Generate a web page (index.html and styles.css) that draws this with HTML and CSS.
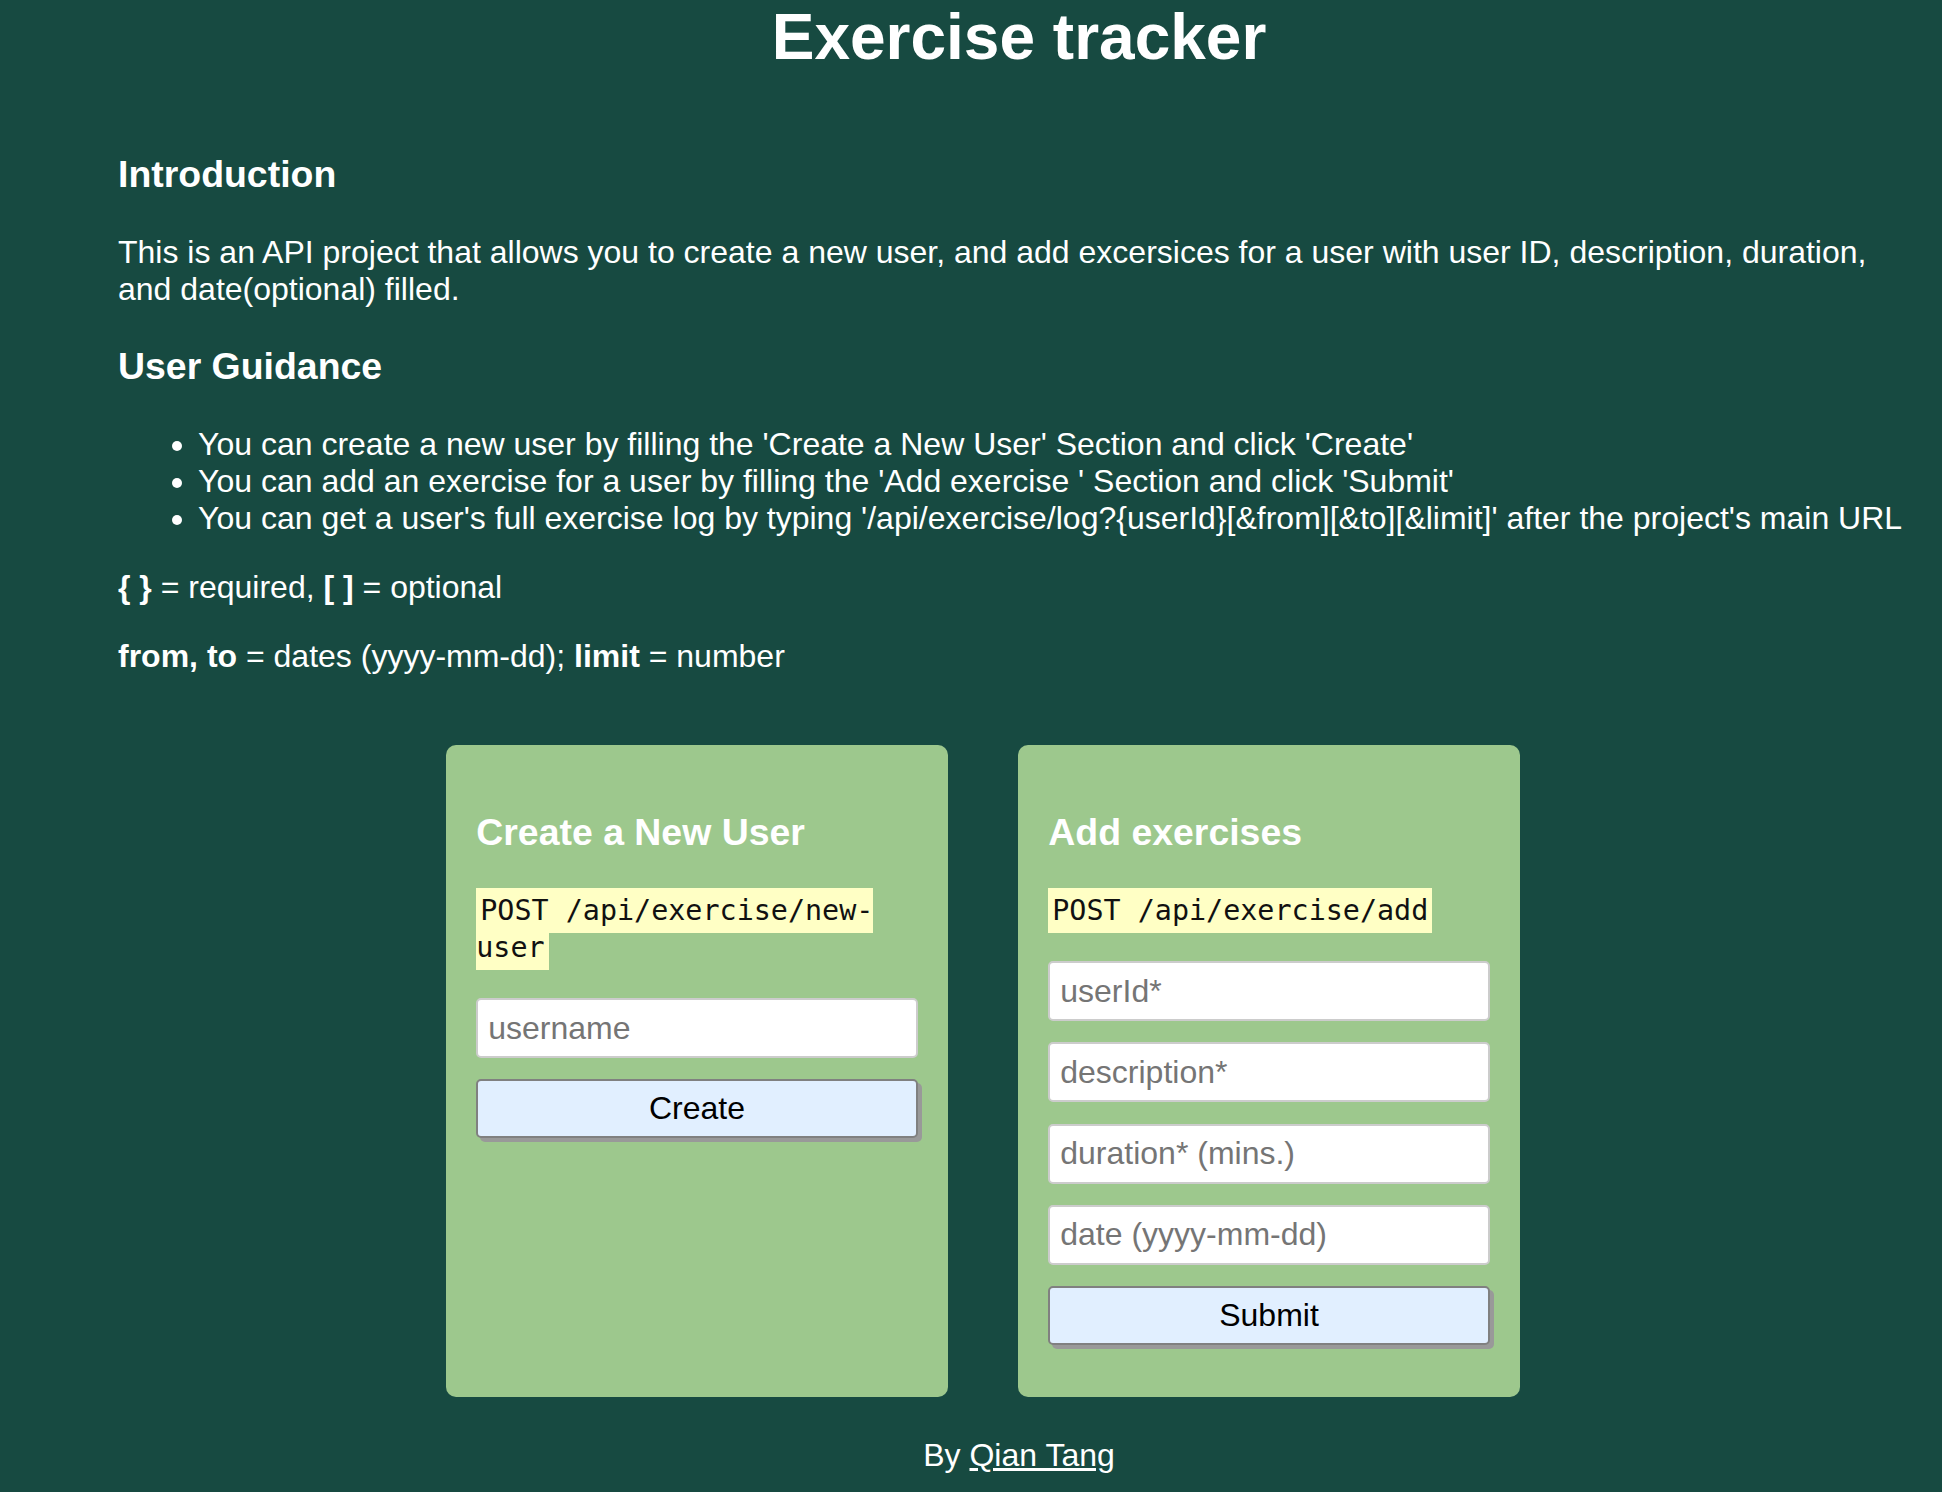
FILE: index.html
```html
<!DOCTYPE html>
<html lang="en">
<head>
<meta charset="utf-8">
<title>Exercise Tracker</title>
<link rel="stylesheet" href="styles.css">
</head>
<body>
<div class="container">
  <h1 class="title">Exercise tracker</h1>
  <h3 class="section-title">Introduction</h3>
  <p class="text">This is an API project that allows you to create a new user, and add excersices for a user with user ID, description, duration, and date(optional) filled.</p>
  <h3 class="section-title">User Guidance</h3>
  <ul class="guide">
    <li>You can create a new user by filling the 'Create a New User' Section and click 'Create'</li>
    <li>You can add an exercise for a user by filling the 'Add exercise ' Section and click 'Submit'</li>
    <li>You can get a user's full exercise log by typing '/api/exercise/log?{userId}[&amp;from][&amp;to][&amp;limit]' after the project's main URL</li>
  </ul>
  <p class="text"><b>{ }</b> = required, <b>[ ]</b> = optional</p>
  <p class="text"><b>from, to</b> = dates (yyyy-mm-dd); <b>limit</b> = number</p>
  <div class="cards">
    <form class="card">
      <h3 class="card-title">Create a New User</h3>
      <p class="endpoint"><code class="code">POST /api/exercise/new-user</code></p>
      <input class="field" type="text" placeholder="username">
      <button class="btn" type="button">Create</button>
    </form>
    <form class="card">
      <h3 class="card-title">Add exercises</h3>
      <p class="endpoint"><code class="code">POST /api/exercise/add</code></p>
      <input class="field" type="text" placeholder="userId*">
      <input class="field" type="text" placeholder="description*">
      <input class="field" type="text" placeholder="duration* (mins.)">
      <input class="field" type="text" placeholder="date (yyyy-mm-dd)">
      <button class="btn" type="button">Submit</button>
    </form>
  </div>
  <p class="footer">By <a class="link" href="#">Qian Tang</a></p>
</div>
</body>
</html>
```

FILE: styles.css
```css
html, body {
  margin: 0;
  padding: 0;
  background: #174a41;
}

body {
  font-family: "Liberation Sans", Arial, sans-serif;
  font-size: 32px;
  color: #ffffff;
  min-height: 1492px;
}

.container {
  padding: 0 22px 0 118px;
}

.title {
  font-size: 64px;
  font-weight: bold;
  text-align: center;
  margin: 0 0 79px;
}

.section-title {
  font-size: 37.44px;
  font-weight: bold;
  margin: 37.44px 0 38px;
}

.text {
  margin: 32px 0;
}

.guide {
  margin: 32px 0;
  padding-left: 80px;
}

.cards {
  display: flex;
  justify-content: center;
  gap: 70.5px;
  padding-right: 72px;
  margin-top: 69.8px;
}

.card {
  box-sizing: border-box;
  width: 501.5px;
  padding: 30px 30px 30.5px;
  background: #9dc88d;
  border-radius: 10px;
}

.card-title {
  font-size: 37.44px;
  font-weight: bold;
  color: #ffffff;
  margin: 36.2px 0 36.3px;
}

.endpoint {
  margin: 32px 0 33.3px;
}

.code {
  font-family: "DejaVu Sans Mono", "Liberation Mono", monospace;
  font-size: 28.4px;
  background: #ffffc5;
  color: #111111;
  padding: 6px 4px;
}

.field {
  display: block;
  box-sizing: border-box;
  width: 100%;
  font-family: "Liberation Sans", Arial, sans-serif;
  font-size: 32px;
  line-height: normal;
  padding: 9.5px 10px;
  border: 2px solid #cccccc;
  border-radius: 5px;
  background: #ffffff;
  color: #000000;
  margin: 0 0 21.3px;
  outline: none;
}

.field::placeholder {
  color: #757575;
}

.btn {
  display: block;
  box-sizing: border-box;
  width: 100%;
  font-family: "Liberation Sans", Arial, sans-serif;
  font-size: 32px;
  line-height: normal;
  padding: 9px;
  border: 2px solid #808080;
  border-radius: 5px;
  background: #e1efff;
  color: #000000;
  box-shadow: 4px 4px 0 #999999;
  margin: 0 0 21px;
}

.footer {
  text-align: center;
  margin: 40px 0 0;
}

.link {
  color: #ffffff;
  text-decoration: underline;
}
```
